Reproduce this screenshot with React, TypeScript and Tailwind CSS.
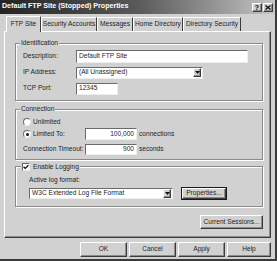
import React from "react";

const sunken =
  "bg-white border border-t-[#6a6a6a] border-l-[#6a6a6a] border-r-[#eeeeee] border-b-[#eeeeee]";
const raised =
  "bg-[#d1d1d1] border border-t-white border-l-white border-r-[#3c3c3c] border-b-[#3c3c3c] shadow-[inset_-1px_-1px_0_#8c8c8c]";

function Btn({ w, label, extra = "" }: { w: string; label: string; extra?: string }) {
  return (
    <div className={`${raised} ${w} h-full flex items-center justify-center text-[#1e1e1e] ${extra}`}>
      {label}
    </div>
  );
}

function DropArrow() {
  return (
    <div className={`${raised} w-[8px] h-[9px] flex items-center justify-center`}>
      <svg width="5" height="3" viewBox="0 0 5 3">
        <polygon points="0,0 5,0 2.5,3" fill="#111" />
      </svg>
    </div>
  );
}

function Radio({ checked }: { checked?: boolean }) {
  return (
    <span className="w-[8px] h-[8px] rounded-full bg-white border border-t-[#6a6a6a] border-l-[#6a6a6a] border-r-[#eeeeee] border-b-[#eeeeee] flex items-center justify-center shrink-0">
      {checked && <span className="w-[3px] h-[3px] rounded-full bg-[#111]" />}
    </span>
  );
}

function Tab({ w, label, active }: { w: string; label: string; active?: boolean }) {
  if (active) {
    return (
      <div className={`${w} h-[16px] relative z-10 -mb-[1px] bg-[#d1d1d1] border-t border-l border-r border-t-white border-l-white border-r-[#3c3c3c] flex items-center justify-center pb-[1px]`}>
        {label}
      </div>
    );
  }
  return (
    <div className={`${w} h-[14px] bg-[#d1d1d1] border-t border-l border-r border-t-white border-l-white border-r-[#3c3c3c] flex items-center justify-center`}>
      {label}
    </div>
  );
}

export default function App() {
  return (
    <div className="w-[277px] h-[261px] overflow-hidden bg-[#d1d1d1] font-['Liberation_Sans',Arial,sans-serif] text-[6.6px] leading-none text-[#1e1e1e] flex flex-col border-r-2 border-b-2 border-r-[#3a3a3a] border-b-[#3a3a3a]">
      {/* Title bar */}
      <div className="h-[14px] shrink-0 bg-linear-to-r from-[#242424] via-[#5a5a5a] to-[#c6c6c6] flex items-center pl-[2px] pr-[2px]">
        <span className="text-white font-bold text-[7.1px] flex-1">Default FTP Site (Stopped) Properties</span>
        <div className={`${raised} w-[10px] h-[9px] flex items-center justify-center font-bold text-[7px] text-black`}>?</div>
        <div className={`${raised} w-[10px] h-[9px] ml-[1px] flex items-center justify-center`}>
          <svg width="6" height="5" viewBox="0 0 6 5">
            <path d="M0.5 0.5 L5.5 4.5 M5.5 0.5 L0.5 4.5" stroke="#111" strokeWidth="1.3" />
          </svg>
        </div>
      </div>

      {/* Tabs */}
      <div className="flex items-end pl-[6px] mt-[1px] h-[16px] shrink-0">
        <Tab w="w-[35px]" label="FTP Site" active />
        <Tab w="w-[56px]" label="Security Accounts" />
        <Tab w="w-[36px]" label="Messages" />
        <Tab w="w-[50px]" label="Home Directory" />
        <Tab w="w-[58px]" label="Directory Security" />
      </div>

      {/* Panel */}
      <div className="ml-[4px] w-[267px] h-[207px] shrink-0 border border-t-white border-l-white border-r-[#3c3c3c] border-b-[#3c3c3c] shadow-[inset_-1px_-1px_0_#8c8c8c] pl-[10px] pt-[11px] flex flex-col">
        {/* Identification */}
        <div className="relative w-[248px] h-[58px] border border-[#8a8a8a] shadow-[inset_1px_1px_0_#fff,1px_1px_0_#fff] pt-[6px] pl-[7px] flex flex-col gap-[3px]">
          <span className="absolute -top-[4px] left-[4px] bg-[#d1d1d1] px-[1px]">Identification</span>
          <div className="flex items-center h-[13px]">
            <span className="w-[53px]">Description:</span>
            <div className={`${sunken} w-[172px] h-[13px] flex items-center px-[2px]`}>Default FTP Site</div>
          </div>
          <div className="flex items-center h-[13px]">
            <span className="w-[53px]">IP Address:</span>
            <div className={`${sunken} w-[127px] h-[12px] flex items-center pl-[2px] pr-[1px]`}>
              <span className="flex-1">(All Unassigned)</span>
              <DropArrow />
            </div>
          </div>
          <div className="flex items-center h-[13px]">
            <span className="w-[53px]">TCP Port:</span>
            <div className={`${sunken} w-[42px] h-[12px] flex items-center px-[2px]`}>12345</div>
          </div>
        </div>

        {/* Connection */}
        <div className="relative mt-[8px] w-[248px] h-[51px] border border-[#8a8a8a] shadow-[inset_1px_1px_0_#fff,1px_1px_0_#fff] pt-[8px] pl-[7px] flex flex-col">
          <span className="absolute -top-[4px] left-[4px] bg-[#d1d1d1] px-[1px]">Connection</span>
          <div className="flex items-center h-[8px] gap-[2px]">
            <Radio />
            <span>Unlimited</span>
          </div>
          <div className="flex items-center h-[12px] mt-[2px]">
            <div className="w-[62px] flex items-center gap-[2px]">
              <Radio checked />
              <span>Limited To:</span>
            </div>
            <div className={`${sunken} w-[52px] h-[12px] flex items-center justify-end px-[2px]`}>100,000</div>
            <span className="ml-[2px]">connections</span>
          </div>
          <div className="flex items-center h-[12px] mt-[3px]">
            <span className="w-[62px]">Connection Timeout:</span>
            <div className={`${sunken} w-[52px] h-[11px] flex items-center justify-end px-[2px]`}>900</div>
            <span className="ml-[2px]">seconds</span>
          </div>
        </div>

        {/* Logging */}
        <div className="relative mt-[6px] w-[248px] h-[41px] border border-[#8a8a8a] shadow-[inset_1px_1px_0_#fff,1px_1px_0_#fff] pt-[10px] pl-[13px] flex flex-col">
          <div className="absolute -top-[4px] left-[5px] bg-[#d1d1d1] px-[1px] flex items-center gap-[3px]">
            <span className={`${sunken} w-[8px] h-[8px] flex items-center justify-center`}>
              <svg width="6" height="6" viewBox="0 0 6 6">
                <path d="M0.6 2.8 L2.2 4.4 L5.4 1.2" stroke="#111" strokeWidth="1.3" fill="none" />
              </svg>
            </span>
            <span>Enable Logging</span>
          </div>
          <span>Active log format:</span>
          <div className="flex items-center mt-[3px] h-[13px]">
            <div className={`${sunken} w-[144px] h-[11px] flex items-center pl-[2px] pr-[1px]`}>
              <span className="flex-1">W3C Extended Log File Format</span>
              <DropArrow />
            </div>
            <div className="ml-[8px] w-[46px] h-[13px] border border-[#1a1a1a]">
              <Btn w="w-full" label="Properties..." />
            </div>
          </div>
        </div>

        <div className="flex justify-end w-[248px] mt-[8px] h-[14px]">
          <Btn w="w-[63px]" label="Current Sessions..." />
        </div>
      </div>

      {/* Bottom buttons */}
      <div className="flex pl-[80px] mt-[4px] h-[15px] gap-[2px]">
        <Btn w="w-[47px]" label="OK" />
        <Btn w="w-[47px]" label="Cancel" />
        <Btn w="w-[47px]" label="Apply" />
        <Btn w="w-[44px]" label="Help" />
      </div>
    </div>
  );
}
